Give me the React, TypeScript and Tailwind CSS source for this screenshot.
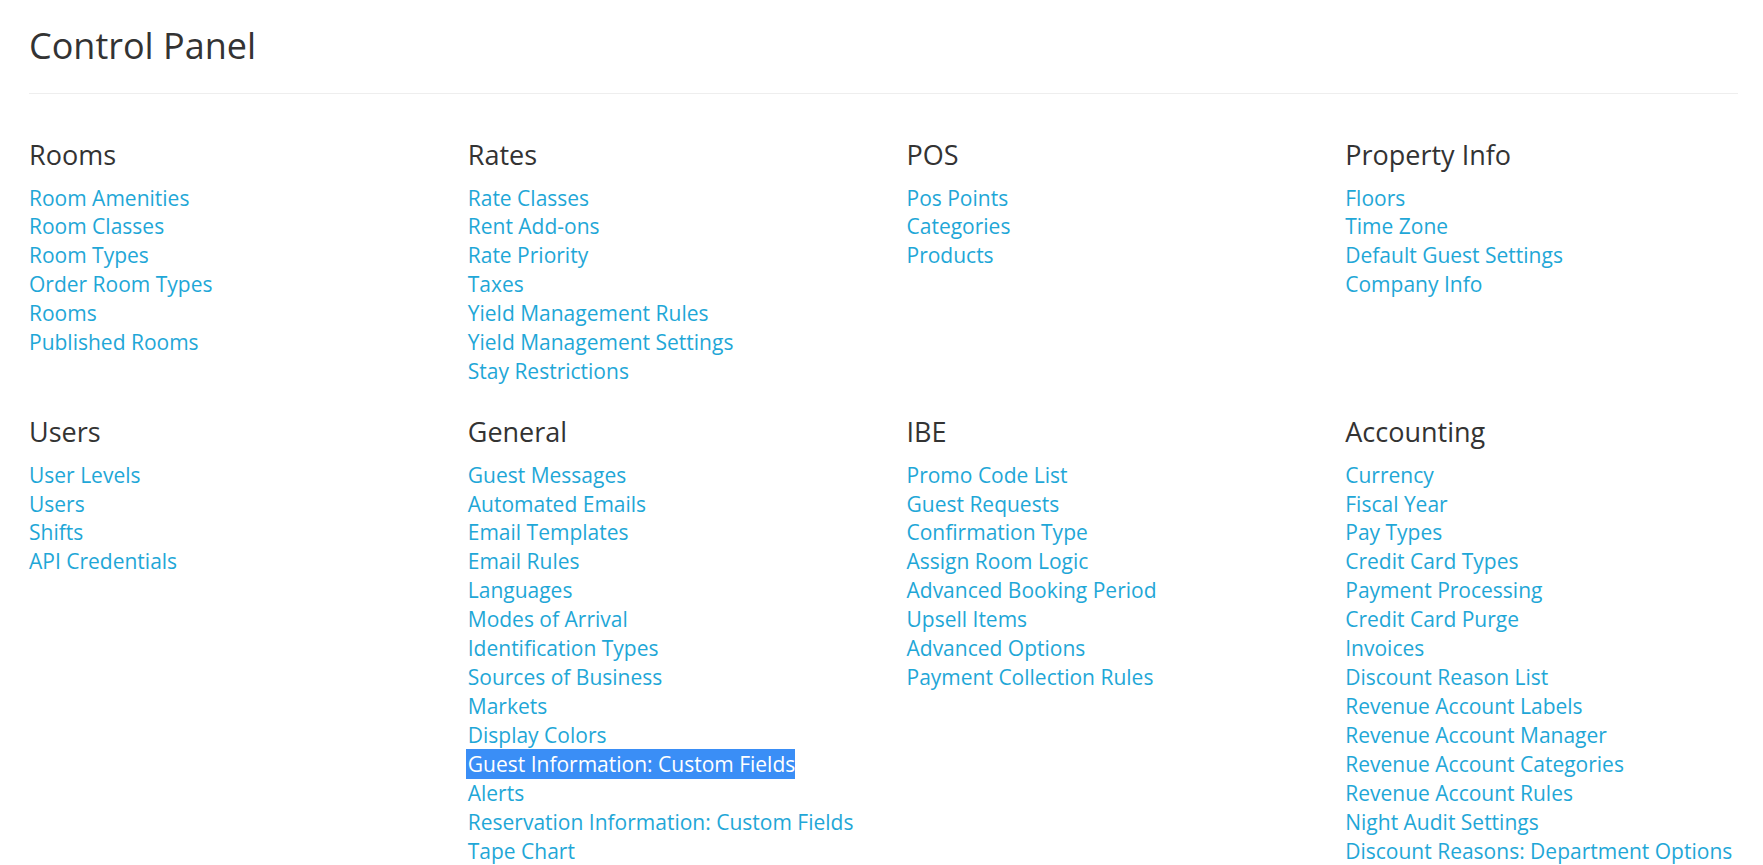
import React from "react"

type Section = {
  title: string
  links: string[]
}

const topRow: Section[] = [
  {
    title: "Rooms",
    links: ["Room Amenities", "Room Classes", "Room Types", "Order Room Types", "Rooms", "Published Rooms"],
  },
  {
    title: "Rates",
    links: [
      "Rate Classes",
      "Rent Add-ons",
      "Rate Priority",
      "Taxes",
      "Yield Management Rules",
      "Yield Management Settings",
      "Stay Restrictions",
    ],
  },
  {
    title: "POS",
    links: ["Pos Points", "Categories", "Products"],
  },
  {
    title: "Property Info",
    links: ["Floors", "Time Zone", "Default Guest Settings", "Company Info"],
  },
]

const bottomRow: Section[] = [
  {
    title: "Users",
    links: ["User Levels", "Users", "Shifts", "API Credentials"],
  },
  {
    title: "General",
    links: [
      "Guest Messages",
      "Automated Emails",
      "Email Templates",
      "Email Rules",
      "Languages",
      "Modes of Arrival",
      "Identification Types",
      "Sources of Business",
      "Markets",
      "Display Colors",
      "Guest Information: Custom Fields",
      "Alerts",
      "Reservation Information: Custom Fields",
      "Tape Chart",
    ],
  },
  {
    title: "IBE",
    links: [
      "Promo Code List",
      "Guest Requests",
      "Confirmation Type",
      "Assign Room Logic",
      "Advanced Booking Period",
      "Upsell Items",
      "Advanced Options",
      "Payment Collection Rules",
    ],
  },
  {
    title: "Accounting",
    links: [
      "Currency",
      "Fiscal Year",
      "Pay Types",
      "Credit Card Types",
      "Payment Processing",
      "Credit Card Purge",
      "Invoices",
      "Discount Reason List",
      "Revenue Account Labels",
      "Revenue Account Manager",
      "Revenue Account Categories",
      "Revenue Account Rules",
      "Night Audit Settings",
      "Discount Reasons: Department Options",
    ],
  },
]

// the one link that shows as selected text in the screenshot
const selected = "Guest Information: Custom Fields"

function SectionBlock({ section }: { section: Section }) {
  return (
    <div>
      <h3 className="text-[27px] leading-[30px] text-[#333333] mb-[13.5px]">{section.title}</h3>
      <ul>
        {section.links.map((link) => (
          <li key={link} className="text-[21px] leading-[28.93px] whitespace-nowrap">
            {link === selected ? (
              <a href="#" className="bg-[#3a8ef6] text-white -ml-[2px] pl-[2px] py-[1px]">
                {link}
              </a>
            ) : (
              <a href="#" className="text-[#1fa7d7] hover:underline">
                {link}
              </a>
            )}
          </li>
        ))}
      </ul>
    </div>
  )
}

export default function App() {
  return (
    <div
      className="h-[865px] overflow-hidden bg-white pl-[29px]"
      style={{ fontFamily: '"Open Sans", "Noto Sans", sans-serif' }}
    >
      <h1 className="pt-[26px] text-[36px] leading-[40px] text-[#333333]">Control Panel</h1>
      <div className="mt-[27px] mr-[25px] border-t border-[#eeeeee]"></div>

      <div className="pt-[46px] flex flex-col gap-y-[31px]">
        <div className="grid grid-cols-[438.75px_438.75px_438.75px_1fr]">
          {topRow.map((s) => (
            <SectionBlock key={s.title} section={s} />
          ))}
        </div>
        <div className="grid grid-cols-[438.75px_438.75px_438.75px_1fr]">
          {bottomRow.map((s) => (
            <SectionBlock key={s.title} section={s} />
          ))}
        </div>
      </div>
    </div>
  )
}
